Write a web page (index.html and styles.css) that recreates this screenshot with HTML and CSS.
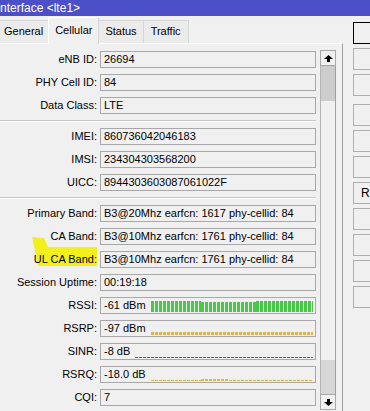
FILE: index.html
```html
<!DOCTYPE html>
<html lang="en">
<head>
    <meta charset="UTF-8">
    <title>Interface &lt;lte1&gt;</title>
    <link rel="stylesheet" href="styles.css">
</head>
<body>

<div class="titlebar">nterface &lt;lte1&gt;</div>

<div class="window">
    <div class="main">
        <div class="tabs">
            <div class="tab">General</div>
            <div class="tab active">Cellular</div>
            <div class="tab">Status</div>
            <div class="tab">Traffic</div>
        </div>

        <div class="panel">
            <div class="fields">
                <div class="row"><span class="label">eNB ID:</span><div class="box">26694</div></div>
                <div class="row"><span class="label">PHY Cell ID:</span><div class="box">84</div></div>
                <div class="row"><span class="label">Data Class:</span><div class="box">LTE</div></div>
                <div class="sep"></div>
                <div class="row"><span class="label">IMEI:</span><div class="box">860736042046183</div></div>
                <div class="row"><span class="label">IMSI:</span><div class="box">234304303568200</div></div>
                <div class="row"><span class="label">UICC:</span><div class="box">8944303603087061022F</div></div>
                <div class="sep"></div>
                <div class="row"><span class="label">Primary Band:</span><div class="box">B3@20Mhz earfcn: 1617 phy-cellid: 84</div></div>
                <div class="row"><span class="label">CA Band:</span><div class="box">B3@10Mhz earfcn: 1761 phy-cellid: 84</div></div>
                <div class="row marked"><span class="label"><span class="label-text">UL CA Band:</span></span><div class="box">B3@10Mhz earfcn: 1761 phy-cellid: 84</div></div>
                <div class="row"><span class="label">Session Uptime:</span><div class="box">00:19:18</div></div>
                <div class="row">
                    <span class="label">RSSI:</span>
                    <div class="box">
                        <span>-61 dBm</span>
                        <div class="graph">
                            <div class="seg green tall first"></div>
                            <div class="seg green short mid"></div>
                            <div class="seg green tall rest"></div>
                        </div>
                    </div>
                </div>
                <div class="row">
                    <span class="label">RSRP:</span>
                    <div class="box">
                        <span>-97 dBm</span>
                        <div class="graph"><div class="seg dots rest"></div></div>
                    </div>
                </div>
                <div class="row">
                    <span class="label">SINR:</span>
                    <div class="box">
                        <span>-8 dB</span>
                        <div class="graph"><div class="seg red-dash rest"></div></div>
                    </div>
                </div>
                <div class="row">
                    <span class="label">RSRQ:</span>
                    <div class="box">
                        <span>-18.0 dB</span>
                        <div class="graph">
                            <div class="seg amber-dash first"></div>
                            <div class="seg amber-dash thick mid-short"></div>
                            <div class="seg amber-dash rest"></div>
                        </div>
                    </div>
                </div>
                <div class="row"><span class="label">CQI:</span><div class="box">7</div></div>
            </div>

            <div class="scrollbar">
                <div class="sb-btn">
                    <svg width="9" height="7" viewBox="0 0 9 7"><path d="M4.5 0 L9 4 H6 V7 H3 V4 H0 Z" fill="#000"/></svg>
                </div>
                <div class="sb-thumb"></div>
                <div class="sb-track"></div>
                <div class="sb-pressed"></div>
                <div class="sb-btn">
                    <svg width="9" height="7" viewBox="0 0 9 7"><path d="M4.5 7 L9 3 H6 V0 H3 V3 H0 Z" fill="#000"/></svg>
                </div>
            </div>
        </div>
    </div>

    <div class="side">
        <div class="btn default"></div>
        <div class="btn"></div>
        <div class="btn"></div>
        <div class="btn group"></div>
        <div class="btn"></div>
        <div class="btn"></div>
        <div class="btn">R</div>
        <div class="btn"></div>
        <div class="btn"></div>
        <div class="btn"></div>
        <div class="btn"></div>
    </div>
</div>

</body>
</html>
```

FILE: styles.css
```css
* {
    margin: 0;
    padding: 0;
    box-sizing: border-box;
}

body {
    background: #f0f0f0;
    font-family: "Liberation Sans", Arial, sans-serif;
    font-size: 11px;
    color: #000;
    height: 100vh;
    overflow: hidden;
}

.titlebar {
    height: 16px;
    line-height: 16px;
    background: #4b50c8;
    color: #fff;
    font-size: 12px;
}

.window {
    display: flex;
    height: calc(100vh - 16px);
}

/* left side: tabs + panel */
.main {
    width: 343px;
    flex-shrink: 0;
    display: flex;
    flex-direction: column;
}

.tabs {
    height: 27px;
    display: flex;
    align-items: flex-end;
}

.tab {
    height: 23px;
    line-height: 21px;
    padding: 0 5px;
    background: #ebebeb;
    border: 1px solid #d6d6d6;
    border-bottom: none;
    margin-right: -1px;
}

.tab:first-child {
    border-left: none;
    padding-left: 4px;
}

.tab:nth-child(3) {
    padding: 0 6px;
}

.tab:nth-child(4) {
    padding: 0 7px;
}

.tab.active {
    height: 27px;
    line-height: 25px;
    padding: 0 6px;
    background: #f0f0f0;
    border-color: #fff #d6d6d6 #f0f0f0 #fff;
    position: relative;
    z-index: 1;
    margin-bottom: -1px;
}

.panel {
    flex: 1;
    display: flex;
    border-top: 1px solid #fff;
    border-right: 1px solid #a0a0a0;
    overflow: hidden;
}

.fields {
    width: 316px;
    padding-top: 7px;
    display: flex;
    flex-direction: column;
    gap: 6px;
}

.row {
    display: grid;
    grid-template-columns: 97px 216px;
    column-gap: 3px;
    height: 17px;
}

.label {
    text-align: right;
    line-height: 17px;
    white-space: nowrap;
}

/* yellow highlighter stroke over "UL CA Band" */
.row.marked {
    position: relative;
}

.row.marked::before {
    content: "";
    position: absolute;
    left: 31px;
    top: -14px;
    width: 66px;
    height: 30px;
    background: #f3ef1f;
    clip-path: polygon(1px 0, 13px 1px, 17px 10px, 66px 10px, 66px 29px, 7px 29px, 4px 14px);
}

.label-text {
    position: relative;
}

.box {
    height: 17px;
    border: 1px solid #a8a8a8;
    padding: 0 2px 0 3px;
    line-height: 15px;
    white-space: nowrap;
    overflow: hidden;
    display: flex;
}

.sep {
    height: 2px;
    border-top: 1px solid #c6c6c6;
    border-bottom: 1px solid #fff;
}

/* signal graphs */
.graph {
    flex: 1;
    margin-left: 5px;
    padding-bottom: 1px;
    display: flex;
    align-items: flex-end;
}

.seg {
    height: 1px;
}

.seg.first {
    width: 50px;
}

.seg.mid {
    width: 55px;
}

.seg.mid-short {
    width: 28px;
}

.seg.rest {
    flex: 1;
}

.green {
    background: repeating-linear-gradient(90deg, #4ac84a 0 3px, transparent 3px 4px);
}

.green.tall {
    height: 11px;
}

.green.short {
    height: 10px;
}

.dots {
    height: 3px;
    background: repeating-linear-gradient(90deg, #f2b128 0 3px, transparent 3px 4px);
}

.red-dash {
    background: repeating-linear-gradient(90deg, #ee2222 0 3px, transparent 3px 4px);
}

.amber-dash {
    background: repeating-linear-gradient(90deg, #f2b128 0 3px, transparent 3px 4px);
}

.amber-dash.thick {
    height: 2px;
}

/* scrollbar */
.scrollbar {
    width: 16px;
    margin: 6px 0 0 4px;
    height: 360px;
    display: flex;
    flex-direction: column;
    border-left: 1px solid #b4b4b4;
    border-right: 1px solid #a0a0a0;
}

.sb-btn {
    height: 16px;
    border: 1px solid #a8a8a8;
    margin: 0 -1px;
    display: flex;
    justify-content: center;
    align-items: center;
    background: #f0f0f0;
}

.sb-thumb {
    height: 35px;
    background: #cdcdcd;
}

.sb-track {
    flex: 1;
}

.sb-pressed {
    height: 34px;
    background: #d6d6d6;
}

/* right button column */
.side {
    flex: 1;
    overflow: hidden;
    padding: 6px 0 0 10px;
    display: flex;
    flex-direction: column;
    gap: 4px;
}

.btn {
    width: 80px;
    height: 22px;
    border: 1px solid #adadad;
    background: #f0f0f0;
    line-height: 20px;
    padding-left: 7px;
    font-size: 12px;
    flex-shrink: 0;
}

.btn.default {
    border: 1px solid #000;
}

.btn.group {
    margin-top: 4px;
}
```
